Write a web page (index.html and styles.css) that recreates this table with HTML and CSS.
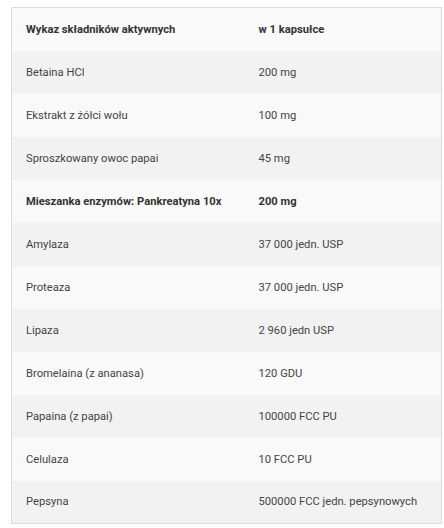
FILE: index.html
```html
<!DOCTYPE html>
<html lang="pl">
<head>
<meta charset="utf-8">
<link rel="stylesheet" href="styles.css">
</head>
<body>
<div class="wrap">
<table class="tbl">
<tr class="head"><td>Wykaz składników aktywnych</td><td>w 1 kapsułce</td></tr>
<tr class="odd"><td>Betaina HCl</td><td>200 mg</td></tr>
<tr class="even"><td>Ekstrakt z żółci wołu</td><td>100 mg</td></tr>
<tr class="odd"><td>Sproszkowany owoc papai</td><td>45 mg</td></tr>
<tr class="even bold"><td>Mieszanka enzymów: Pankreatyna 10x</td><td>200 mg</td></tr>
<tr class="odd"><td>Amylaza</td><td>37 000 jedn. USP</td></tr>
<tr class="even"><td>Proteaza</td><td>37 000 jedn. USP</td></tr>
<tr class="odd"><td>Lipaza</td><td>2 960 jedn USP</td></tr>
<tr class="even"><td>Bromelaina (z ananasa)</td><td>120 GDU</td></tr>
<tr class="odd"><td>Papaina (z papai)</td><td>100000 FCC PU</td></tr>
<tr class="even"><td>Celulaza</td><td>10 FCC PU</td></tr>
<tr class="odd"><td>Pepsyna</td><td>500000 FCC jedn. pepsynowych</td></tr>
</table>
</div>
</body>
</html>
```
FILE: styles.css
```css
html, body { margin: 0; padding: 0; background: #fff; }
.wrap { padding: 7px 2px 0 11px; }
.tbl {
  width: 431px;
  border-collapse: collapse;
  border: 1px solid #dcdcdc;
  font-family: Roboto, "Liberation Sans", sans-serif;
  font-size: 11.2px;
  color: #444;
  table-layout: fixed;
}
.tbl td {
  height: 43px;
  padding: 0 14px;
  box-sizing: border-box;
  vertical-align: middle;
  white-space: nowrap;
}
.tbl td:first-child { width: 233px; }
.head, .even { background: #f9f9f9; }
.odd { background: #f2f2f2; }
.head td, .bold td { font-weight: bold; color: #333; }
```
